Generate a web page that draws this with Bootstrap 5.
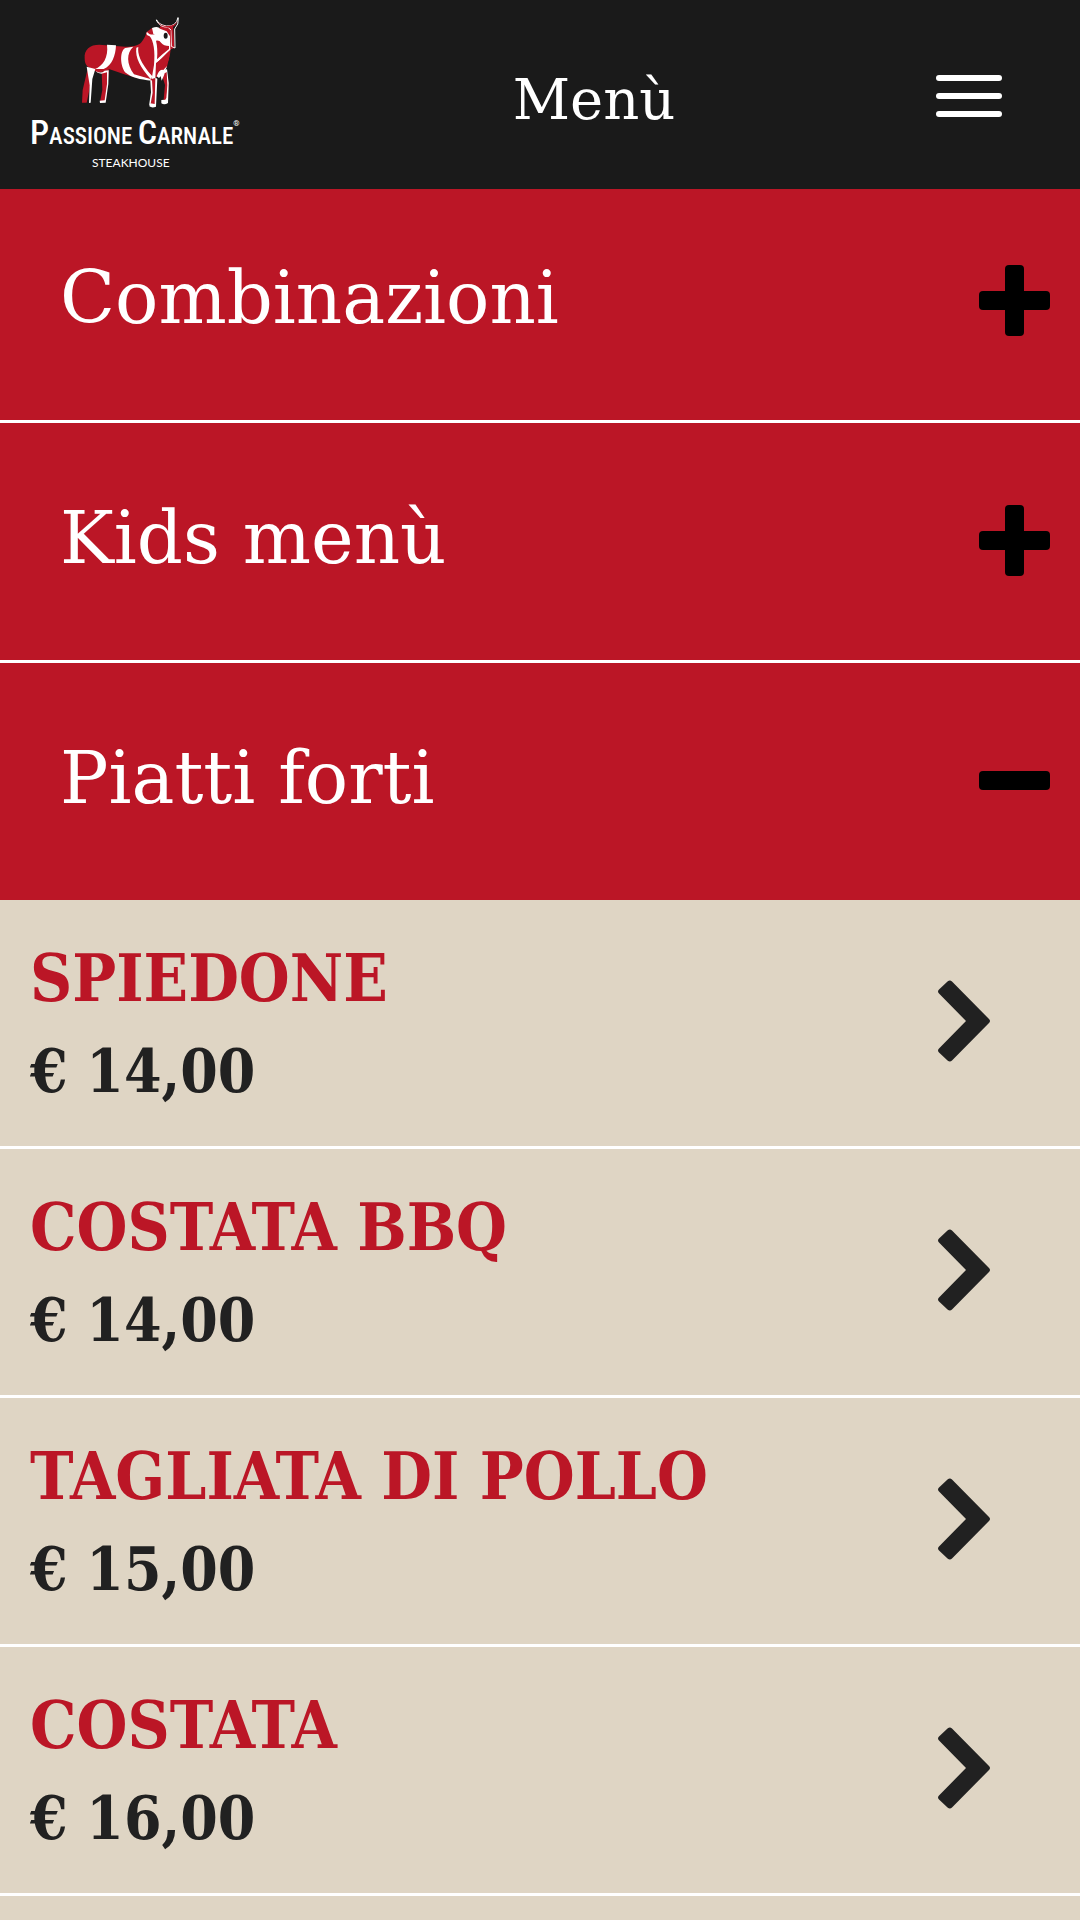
<!DOCTYPE html>
<html lang="it">
<head>
<meta charset="utf-8">
<meta name="viewport" content="width=device-width, initial-scale=1">
<title>Menù – Passione Carnale</title>
<link href="https://cdn.jsdelivr.net/npm/bootstrap@5.3.0/dist/css/bootstrap.min.css" rel="stylesheet">
<style>
  :root { --brand-red: #bb1626; --brand-sand: #dfd5c4; --brand-dark: #1a1a1a; --ink: #212121; }
  body { background: var(--brand-sand); font-family: "Roboto Slab", "DejaVu Serif", serif; }
  .topbar { height: 189px; background: var(--brand-dark); margin-bottom: -6px; padding: 10px 78px 0 30px; z-index: 1020; }
  .brand-link { width: 222px; font-family: "Roboto Condensed", "Liberation Sans Narrow", Roboto, sans-serif; }
  .brand-bull { width: 120px; height: 105px; margin-left: 40px; }
  .brand-name { font-size: 23px; line-height: 35px; font-weight: 500; }
  .brand-name span { font-size: 34px; }
  .brand-name sup { font-size: 8px; top: -18px; }
  .brand-sub { font: 12px/18px Lato, sans-serif; padding-left: 62px; }
  .page-title { font-size: 56px; line-height: 80px; padding-top: 50px; }
  .menu-toggle { margin-top: 62px; }
  .category { height: 240px; padding: 0 30px 3px 60px; background: var(--brand-red); border-bottom: 3px solid #fff; }
  .category[aria-expanded="true"] { height: 237px; border-bottom: 0; }
  .category-label { font-size: 72px; line-height: 84px; padding-bottom: 4px; }
  .category[aria-expanded="true"] .v-bar { display: none; }
  .dish { height: 249px; padding: 0 90px 4px 30px; border-bottom: 3px solid #fff; color: var(--ink); }
  .dish-text { font-family: "Roboto Slab", "DejaVu Serif Condensed", "DejaVu Serif", serif; line-height: 93px; font-weight: 700; padding-top: 8px; }
  .dish-name { font-size: 65px; color: var(--brand-red); }
  .dish-price { font-size: 60px; }
</style>
<script src="https://cdn.jsdelivr.net/npm/bootstrap@5.3.0/dist/js/bootstrap.bundle.min.js"></script>
</head>
<body>
<svg class="d-none" aria-hidden="true">
  <symbol id="chevron" viewBox="0 0 52 82">
    <path d="M9.500 1.500Q12 -.5 14 1.500L51 39Q53 41 51 43L14 80.500Q12 82.500 9.500 80.500L1 72.500Q-1 70.500 1 68.500L28 41 1 13.500Q-1 11.500 1 9.500Z" fill="currentColor"/>
  </symbol>
  <symbol id="toggle-sign" viewBox="0 0 71 71">
    <rect y="26" width="71" height="19" rx="4"/>
  </symbol>
</svg>

<header class="topbar sticky-top d-flex align-items-start justify-content-between text-white">
  <a href="#" class="brand-link d-block text-white text-decoration-none">
    <svg class="brand-bull d-block" viewBox="0 0 360 315" role="img" aria-label="Toro">
      <g fill="#bb1626">
        <path d="M44 145C42 118 60 104 88 104L166 110C190 110 204 106 213 98 222 88 228 76 229 67L246 54 268 54 273 47 309 48 313 114 302 118 300 133 291 170 275 194 243 209C200 208 160 192 119 178L104 184 84 188 62 175C49 170 44 160 44 145Z"/>
        <path d="M53 176 66 202 60 230 50 278 36 278 38 240Z"/>
        <path d="M95 186 117 180 112 230 107 275 90 276 97 240Z"/>
        <path d="M241 207 258 204 256 285 241 289 247 248Z"/>
        <path d="M274 188 289 180 296 220 293 272 280 279 285 225Z"/>
      </g>
      <g fill="#fff">
        <path d="M111 104 138 106C137 136 126 168 101 177L75 177C98 168 116 143 111 104Z"/>
        <path d="M190 110C169 128 169 162 192 193L241 207 244 212C210 209 184 203 165 187 148 160 151 121 166 114Z"/>
        <path d="M205 111C202 130 210 158 247 199L243 208C211 172 195 143 199 113Z"/>
        <path d="M231 66C241 78 251 72 264 74L279 86C282 96 292 98 300 94L301 119C285 132 274 148 258 160L256 204 245 207 252 165C256 125 251 90 238 78 231 77 227 72 231 66Z"/>
        <path d="M246 54Q264 47 270 56L290 64 300 79 300 102Q285 107 277 96L264 80 250 72Z"/>
        <path d="M50 170 76 177 67 207 62 278 57 279 59 226Z"/>
        <path d="M78 183Q93 193 104 182L116 181 115 222 107 278 90 279 89 272 104 271 111 222 111 187 94 191Q81 190 78 183Z"/>
        <path d="M256 203 262 206 258 290Q246 295 238 289L241 280 254 282Z"/>
        <path d="M241 212 246 211 248 248 242 281 237 287 243 247Z"/>
        <path d="M270 190 291 177 296 219 294 279Q283 286 274 280L274 270 286 269 291 230 285 189 275 212Z"/>
        <path d="M260 199Q268 175 280 180L291 168 285 185 267 204Z"/>
      </g>
      <path d="M258 160C272 149 282 141 300 124L296 151 282 162 262 188Z" fill="#bb1626"/>
      <path d="M258 92Q268 90 274 99 281 108 297 108L297 117Q280 130 261 148 264 116 258 92Z" fill="#bb1626"/>
      <path d="M284 190 290 186 292 225 289 264 284 270 287 228Z" fill="#bb1626"/>
      <g fill="none" stroke="#fff" stroke-width="3" stroke-linecap="round">
        <path d="M260 30Q266 44 289 48 319 51 324 23"/>
        <path d="M259 31Q270 53 293 51L304 61 304 109 315 114 314 57Q327 43 325 25"/>
      </g>
      <path d="M261 34Q270 48 292 48 317 48 323 31 319 46 309 50L311 110 306 108 304 56 291 51Q270 50 261 34Z" fill="#bb1626"/>
      <ellipse cx="287" cy="77" rx="6" ry="9" fill="#1a1a1a"/>
    </svg>
    <span class="brand-name d-block text-nowrap"><span>P</span>ASSIONE <span>C</span>ARNALE<sup>®</sup></span>
    <span class="brand-sub d-block">STEAKHOUSE</span>
  </a>
  <h1 class="page-title fw-normal m-0">Menù</h1>
  <button type="button" class="menu-toggle btn p-0 border-0 text-white" aria-label="Apri navigazione">
    <svg class="d-block" width="66" height="48" viewBox="0 0 66 48" fill="currentColor"><rect y="3" width="66" height="6" rx="3"/><rect y="21" width="66" height="6" rx="3"/><rect y="39" width="66" height="6" rx="3"/></svg>
  </button>
</header>

<main>
  <button type="button" class="category btn rounded-0 border-top-0 border-start-0 border-end-0 w-100 d-flex align-items-center justify-content-between text-white" aria-expanded="false">
    <span class="category-label">Combinazioni</span>
    <svg width="71" height="71" viewBox="0 0 71 71" fill="#000"><use href="#toggle-sign"/><rect class="v-bar" x="26" width="19" height="71" rx="4"/></svg>
  </button>
  <button type="button" class="category btn rounded-0 border-top-0 border-start-0 border-end-0 w-100 d-flex align-items-center justify-content-between text-white" aria-expanded="false">
    <span class="category-label">Kids menù</span>
    <svg width="71" height="71" viewBox="0 0 71 71" fill="#000"><use href="#toggle-sign"/><rect class="v-bar" x="26" width="19" height="71" rx="4"/></svg>
  </button>
  <button type="button" class="category btn rounded-0 border-0 w-100 d-flex align-items-center justify-content-between text-white" data-bs-toggle="collapse" data-bs-target="#piatti-forti" aria-controls="piatti-forti" aria-expanded="true">
    <span class="category-label">Piatti forti</span>
    <svg width="71" height="71" viewBox="0 0 71 71" fill="#000"><use href="#toggle-sign"/><rect class="v-bar" x="26" width="19" height="71" rx="4"/></svg>
  </button>
  <div id="piatti-forti" class="collapse show">
    <a href="#" class="dish d-flex align-items-center justify-content-between text-decoration-none">
      <span class="dish-text"><span class="dish-name d-block">SPIEDONE</span><span class="dish-price d-block">€ 14,00</span></span>
      <svg width="52" height="82"><use href="#chevron"/></svg>
    </a>
    <a href="#" class="dish d-flex align-items-center justify-content-between text-decoration-none">
      <span class="dish-text"><span class="dish-name d-block">COSTATA BBQ</span><span class="dish-price d-block">€ 14,00</span></span>
      <svg width="52" height="82"><use href="#chevron"/></svg>
    </a>
    <a href="#" class="dish d-flex align-items-center justify-content-between text-decoration-none">
      <span class="dish-text"><span class="dish-name d-block">TAGLIATA DI POLLO</span><span class="dish-price d-block">€ 15,00</span></span>
      <svg width="52" height="82"><use href="#chevron"/></svg>
    </a>
    <a href="#" class="dish d-flex align-items-center justify-content-between text-decoration-none">
      <span class="dish-text"><span class="dish-name d-block">COSTATA</span><span class="dish-price d-block">€ 16,00</span></span>
      <svg width="52" height="82"><use href="#chevron"/></svg>
    </a>
  </div>
</main>
</body>
</html>
